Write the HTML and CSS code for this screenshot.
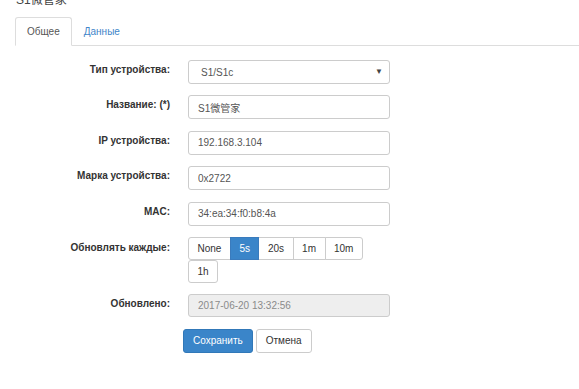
FILE: index.html
```html
<!DOCTYPE html>
<html lang="ru">
<head>
<meta charset="utf-8">
<title>S1微管家</title>
<link rel="stylesheet" href="styles.css">
</head>
<body>
<div class="page">
  <div class="topfade"></div>
  <h4 class="title">S1微管家</h4>
  <ul class="tabs">
    <li class="tab active"><a>Общее</a></li>
    <li class="tab"><a>Данные</a></li>
  </ul>
  <form class="form">
    <div class="row">
      <label class="lbl">Тип устройства:</label>
      <div class="ctl select-wrap">
        <select class="input select"><option>S1/S1c</option></select>
        <span class="caret">▼</span>
      </div>
    </div>
    <div class="row">
      <label class="lbl">Название: (*)</label>
      <div class="ctl"><input class="input" value="S1微管家"></div>
    </div>
    <div class="row">
      <label class="lbl">IP устройства:</label>
      <div class="ctl"><input class="input" value="192.168.3.104"></div>
    </div>
    <div class="row">
      <label class="lbl">Марка устройства:</label>
      <div class="ctl"><input class="input" value="0x2722"></div>
    </div>
    <div class="row">
      <label class="lbl">MAC:</label>
      <div class="ctl"><input class="input" value="34:ea:34:f0:b8:4a"></div>
    </div>
    <div class="row">
      <label class="lbl lbl-btn">Обновлять каждые:</label>
      <div class="ctl group">
        <button type="button" class="gbtn">None</button>
        <button type="button" class="gbtn on">5s</button>
        <button type="button" class="gbtn">20s</button>
        <button type="button" class="gbtn">1m</button>
        <button type="button" class="gbtn">10m</button>
        <button type="button" class="gbtn">1h</button>
      </div>
    </div>
    <div class="row">
      <label class="lbl lbl-dis">Обновлено:</label>
      <div class="ctl"><input class="input dis" value="2017-06-20 13:32:56" disabled></div>
    </div>
    <div class="actions">
      <button type="button" class="btn primary">Сохранить</button>
      <button type="button" class="btn">Отмена</button>
    </div>
  </form>
</div>
</body>
</html>
```
FILE: styles.css
```css
html, body {
  margin: 0;
  padding: 0;
  background: #fff;
  overflow: hidden;
}
body {
  font-family: "Liberation Sans", Arial, "Noto Sans CJK SC", sans-serif;
  font-size: 10px;
  color: #333;
}
.page {
  position: relative;
  padding-left: 15px;
}
.topfade {
  position: absolute;
  left: 0;
  right: 0;
  top: 0;
  height: 4px;
  background: rgba(255, 255, 255, 0.55);
  border-bottom: 1px solid #ebebeb;
  z-index: 2;
}
.title {
  margin: -7px 0 0 1px;
  height: 24px;
  font-size: 12px;
  line-height: 14px;
  font-weight: normal;
  color: #444;
  font-family: "Liberation Sans", "Noto Sans CJK SC", sans-serif;
}
.tabs {
  list-style: none;
  margin: 0;
  padding: 0;
  display: flex;
  border-bottom: 1px solid #ddd;
}
.tab {
  margin-bottom: -1px;
  margin-right: 0;
}
.tab a {
  display: block;
  padding: 8px 11px;
  line-height: 11px;
  font-size: 10px;
  border: 1px solid transparent;
  border-radius: 3px 3px 0 0;
  color: #3f86c9;
}
.tab.active a {
  color: #555;
  background: #fff;
  border-color: #ddd #ddd transparent;
}
.form {
  margin-top: 14px;
}
.row {
  display: flex;
  align-items: flex-start;
  margin-bottom: 11.4px;
}
.lbl {
  width: 155px;
  flex: none;
  margin-right: 18px;
  text-align: right;
  font-weight: bold;
  line-height: 12px;
  padding-top: 4px;
  color: #333;
}
.lbl-btn {
  padding-top: 5px;
}
.lbl-dis {
  padding-top: 4px;
}
.ctl {
  width: 202px;
  flex: none;
}
.input {
  display: block;
  box-sizing: border-box;
  width: 100%;
  height: 24px;
  margin: 0;
  padding: 0 9px;
  border: 1px solid #ccc;
  border-radius: 3px;
  font: 10px "Liberation Sans", Arial, "Noto Sans CJK SC", sans-serif;
  color: #555;
  background: #fff;
  outline: none;
}
.dis {
  height: 23px;
  background: #eee;
  color: #8a8a8a;
  -webkit-text-fill-color: #8a8a8a;
  opacity: 1;
}
.select-wrap {
  position: relative;
}
.select {
  appearance: none;
  -webkit-appearance: none;
  padding-left: 12px;
}
.caret {
  position: absolute;
  right: 7px;
  top: 7px;
  font-size: 8px;
  line-height: 9px;
  color: #444;
  pointer-events: none;
}
.group {
  display: flex;
  flex-wrap: wrap;
}
.gbtn {
  box-sizing: border-box;
  height: 23px;
  margin: 0 -1px 0 0;
  padding: 0 8.5px;
  border: 1px solid #ccc;
  background: #fff;
  color: #333;
  font: 10px "Liberation Sans", Arial, sans-serif;
  line-height: 21px;
}
.gbtn:first-child {
  border-radius: 3px 0 0 3px;
}
.gbtn:last-child {
  border-radius: 3px;
  margin-left: 0;
}
.gbtn:nth-child(5) {
  border-radius: 0 3px 3px 0;
}
.gbtn.on {
  background: #3a85c9;
  border-color: #3a7bbd;
  color: #fff;
  position: relative;
  z-index: 1;
}
.actions {
  display: flex;
  gap: 3px;
  padding-left: 168px;
  margin-top: 0.6px;
}
.btn {
  box-sizing: border-box;
  height: 24px;
  padding: 0 9px;
  border: 1px solid #ccc;
  border-radius: 3px;
  background: #fff;
  color: #333;
  font: 10px "Liberation Sans", Arial, sans-serif;
}
.btn.primary {
  background: #3a85c9;
  border-color: #3178b8;
  color: #fff;
}
```
